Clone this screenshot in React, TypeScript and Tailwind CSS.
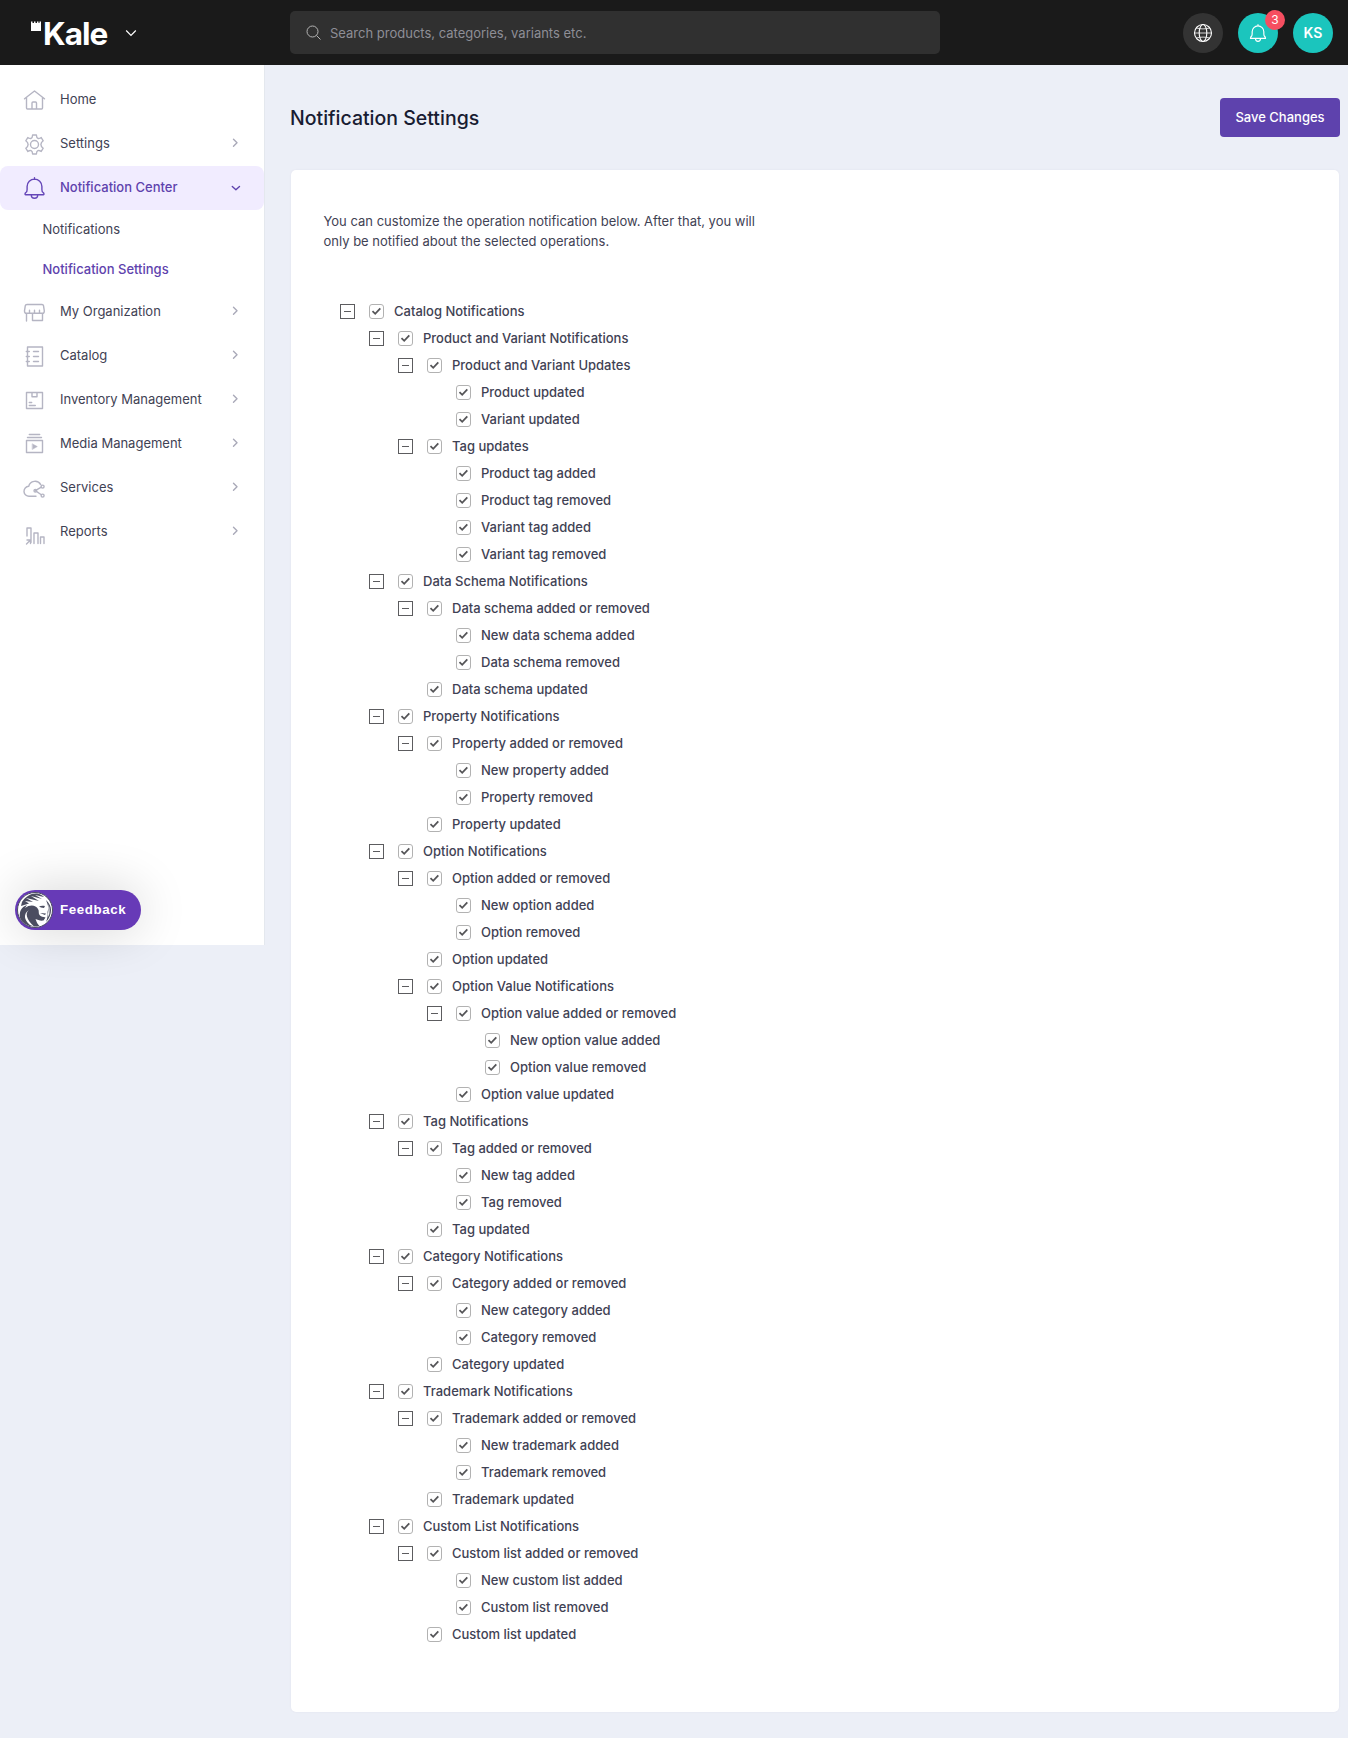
import React from 'react';

const Svg = ({ children }: { children: React.ReactNode }) => (
  <svg width="24" height="24" viewBox="0 0 24 24" fill="none" stroke="currentColor" strokeWidth="1.4" strokeLinecap="round" strokeLinejoin="round" className="shrink-0 overflow-visible">
    {children}
  </svg>
);

const icons: Record<string, React.ReactNode> = {
  home: <Svg><path d="M2.500 10.700 12.500 3 22.500 10.700M4.500 9.500v10.600q0 .9.900.9h14.200q.9 0 .9-.9V9.500M10 21v-6q0-1 1-1h2.500q1 0 1 1v6" /></Svg>,
  settings: (
    <Svg>
      <circle cx="12.500" cy="12.500" r="4" />
      <path d="M10.600 3h3.800q.2 2.900 1.500 3.400t3.300-.9l2 3.300q-2.300 1.600-2.300 3.700t2.300 3.700l-2 3.300q-2-1.400-3.300-.9T14.400 22h-3.800q-.2-2.900-1.500-3.400t-3.300.9l-2-3.300q2.300-1.600 2.300-3.700T3.800 8.800l2-3.300q2 1.400 3.300.9T10.600 3Z" />
    </Svg>
  ),
  bell: (
    <Svg>
      <path d="M12.500 1.800v1.400M3.500 18.700h18q.5 0 .5-.6 0-1.100-1.100-1.900-1-.8-1-2.800v-2.900a7.400 7.400 0 0 0-14.800 0v2.900q0 2-1 2.800Q3 17 3 18.100q0 .6.5.6ZM9.300 19a3.200 3.200 0 0 0 6.400 0" />
    </Svg>
  ),
  store: (
    <Svg>
      <path d="M5 4.500h15q1.300 0 1.500 1.200l.8 5.200q0 2.400-1.600 2.400H4.300q-1.800 0-1.800-2.400l.8-5.200Q3.500 4.500 5 4.500ZM7.500 13v-2.700M12.500 13v-2.700M17.500 13v-2.700M4.500 13.500V21M20.500 13.500v7H10.500v-7" />
    </Svg>
  ),
  catalog: (
    <Svg>
      <path d="M5.500 3h15v19h-15zM4.300 7.500h3M4.300 12.500h3M4.300 17.500h3M11.500 7.500h5M11.500 12.500h5M11.500 17.500h5" />
    </Svg>
  ),
  inventory: <Svg><path d="M4.500 4.500h16v16h-16zM10 4.500v4.300h5V4.500M7.300 14.500h2.400M7.300 17.500h6" /></Svg>,
  media: (
    <Svg>
      <path d="M7.300 2.500h10.400M5.500 5.500h14M4.500 8.500h16v12h-16z" />
      <path d="m10.500 11.900 4.800 2.700-4.800 2.700z" fill="currentColor" strokeWidth=".5" />
    </Svg>
  ),
  services: (
    <Svg>
      <path d="M14 20.300H7.300a5 5 0 0 1-.6-10 6.500 6.500 0 0 1 12-1.700M13.300 14.600l6-3.500M13.300 14.600l6 4.200" />
      <circle cx="13.300" cy="14.800" r="1.300" />
      <circle cx="20.600" cy="10.600" r="1.500" />
      <circle cx="20.600" cy="19.600" r="1.500" />
    </Svg>
  ),
  reports: (
    <Svg>
      <path d="M5 16V8h4v14.500M12 23.500V13h4v10.500M18.500 23.500V17h3.500v6.500M4.500 24l4-4M5 20h3.500v3.500" />
    </Svg>
  ),
};

const Chevron = ({ down = false }: { down?: boolean }) => (
  <svg width="12" height="12" viewBox="0 0 12 12" fill="none" stroke="currentColor" strokeWidth="1.4" strokeLinecap="round" strokeLinejoin="round" className="overflow-visible">
    <path d={down ? 'M3.300 4.500 6.900 7.700 10.500 4.500' : 'M4.500 2.300 8 5.800 4.500 9.300'} />
  </svg>
);

function NavItem({ icon, label, active = false, arrow = true }: { icon: string; label: string; active?: boolean; arrow?: boolean }) {
  return (
    <a className={`flex h-11 items-center pl-[22px] pr-[23px] ${active ? 'rounded-lg bg-[#f1ecff] font-medium text-[#5e42ad]' : 'text-[#3f4254]'}`}>
      <span className={active ? 'text-[#6546b8]' : 'text-[#b5b5c3]'}>{icons[icon]}</span>
      <span className="flex-1 pl-[14px]">{label}</span>
      {arrow && <span className={active ? 'text-[#5e42ad]' : 'pb-0.5 text-[#a9a9b8]'}><Chevron down={active} /></span>}
    </a>
  );
}

type Row = [depth: number, label: string, parent?: boolean];

const rows: Row[] = [
  [0, 'Catalog Notifications', true],
  [1, 'Product and Variant Notifications', true],
  [2, 'Product and Variant Updates', true],
  [3, 'Product updated'],
  [3, 'Variant updated'],
  [2, 'Tag updates', true],
  [3, 'Product tag added'],
  [3, 'Product tag removed'],
  [3, 'Variant tag added'],
  [3, 'Variant tag removed'],
  [1, 'Data Schema Notifications', true],
  [2, 'Data schema added or removed', true],
  [3, 'New data schema added'],
  [3, 'Data schema removed'],
  [2, 'Data schema updated'],
  [1, 'Property Notifications', true],
  [2, 'Property added or removed', true],
  [3, 'New property added'],
  [3, 'Property removed'],
  [2, 'Property updated'],
  [1, 'Option Notifications', true],
  [2, 'Option added or removed', true],
  [3, 'New option added'],
  [3, 'Option removed'],
  [2, 'Option updated'],
  [2, 'Option Value Notifications', true],
  [3, 'Option value added or removed', true],
  [4, 'New option value added'],
  [4, 'Option value removed'],
  [3, 'Option value updated'],
  [1, 'Tag Notifications', true],
  [2, 'Tag added or removed', true],
  [3, 'New tag added'],
  [3, 'Tag removed'],
  [2, 'Tag updated'],
  [1, 'Category Notifications', true],
  [2, 'Category added or removed', true],
  [3, 'New category added'],
  [3, 'Category removed'],
  [2, 'Category updated'],
  [1, 'Trademark Notifications', true],
  [2, 'Trademark added or removed', true],
  [3, 'New trademark added'],
  [3, 'Trademark removed'],
  [2, 'Trademark updated'],
  [1, 'Custom List Notifications', true],
  [2, 'Custom list added or removed', true],
  [3, 'New custom list added'],
  [3, 'Custom list removed'],
  [2, 'Custom list updated'],
];

const indents = ['pl-0', 'pl-[29px]', 'pl-[58px]', 'pl-[87px]', 'pl-[116px]'];

function TreeRow({ row: [depth, label, parent] }: { row: Row }) {
  return (
    <li className={`flex h-[27px] items-center ${indents[depth]}`}>
      <span className="flex w-[29px]">
        {parent && (
          <span className="flex size-[15px] items-center justify-center border border-[#5c5c5f]">
            <span className="h-px w-[7px] bg-[#5c5c5f]" />
          </span>
        )}
      </span>
      <span className="flex size-[15px] items-center justify-center rounded-[3px] border border-[#b2b2b2] text-[#555558]">
        <svg width="11" height="11" viewBox="0 0 11 11" fill="none" stroke="currentColor" strokeWidth="1.8">
          <path d="M1.500 5.200 4.200 7.800 9.300 2.300" />
        </svg>
      </span>
      <span className="ml-[10px]">{label}</span>
    </li>
  );
}

function LionBadge() {
  return (
    <svg width="36" height="36" viewBox="0 0 36 36">
      <circle cx="18" cy="18" r="17.500" fill="#fff" stroke="#4b4d60" />
      <path d="M5 10C9 4 14 1 20 1.500c3 .5 6 2 7 3.500L18 3l7 4-11-3 8 5L9 6l7 4-8-1 4 2.500L4 14z" fill="#4b4d60" />
      <path d="M3 26C2 20 4 15 10 13l-2 3c5-4 11-3 13 1 1.500 2 0 4 1.500 6 1 1.500 4 2 6 2.500l-2 3c-3 .5-6-.5-8-1.500 1 3 2 5 4 7C12 36 6 32 3 26Z" fill="#4b4d60" />
      <path d="M12 18c-4 3-3 9 5 16.500l-4-1.500C7 28 6 22 12 18Z" fill="#fff" />
      <path d="M22 14.500c2-1 4-1 6-.5l-1 2-3-.5zM29 8c3 3 5 6 5 10s-2 9-5 12c1.500-4 2-7 1.500-10L31.500 16l-1-4zM23 21l6 .5-1 1.500z" fill="#4b4d60" />
      <path d="M31.500 12c1.500 4 1.500 9 0 13l-.5-3 .5-4z" fill="#fff" />
    </svg>
  );
}

export default function App() {
  return (
    <div className="flex h-[1738px] w-[1348px] flex-col bg-[#eceff7] font-[Inter,sans-serif] text-[13px] text-[#3f4254]">
      <header className="flex h-[65px] shrink-0 items-center bg-[#1a1a1a]">
        <div className="flex w-[290px] items-center pl-[31px]">
          <svg width="10" height="10" viewBox="0 0 10 10" className="mb-[14px]">
            <path d="M0 .5h1.500V2H3V.5h1.500V2H6V.5h1.500V2h1V.5H10V10H0z" fill="#fff" />
          </svg>
          <span className="ml-[2px] pt-[2px] text-[31.500px] font-bold leading-none tracking-[-1px] text-white">Kale</span>
          <svg width="12" height="8" viewBox="0 0 12 8" fill="none" stroke="#fff" strokeWidth="1.200" className="ml-[17.500px]">
            <path d="m1.200 1.500 4.800 4.800 4.800-4.800" />
          </svg>
        </div>
        <div className="flex h-[43px] w-[650px] items-center rounded-[5px] bg-[#303030] pl-[16px] text-[#8e8e96]">
          <svg width="15" height="15" viewBox="0 0 15 15" fill="none" stroke="#b4b4b4" strokeWidth="1">
            <circle cx="6.500" cy="6.500" r="5.500" />
            <path d="m10.500 10.500 4 4" />
          </svg>
          <span className="ml-[9px] pt-[2px]">Search products, categories, variants etc.</span>
        </div>
        <div className="ml-auto flex gap-[15px] pr-[15px] pt-[1px]">
          <div className="flex size-10 items-center justify-center rounded-full bg-[#333]">
            <svg width="20" height="20" viewBox="0 0 20 20" fill="none" stroke="#fff" strokeWidth="1.100">
              <circle cx="10" cy="10" r="8.500" />
              <ellipse cx="10" cy="10" rx="3.800" ry="8.500" />
              <path d="M1.500 10h17M3.500 5c4 1.200 9 1.200 13 0M3.500 15c4-1.200 9-1.200 13 0" strokeWidth=".8" />
            </svg>
          </div>
          <div className="relative flex size-10 items-center justify-center rounded-full bg-[#1bc5bd] text-white">
            <svg width="20" height="20" viewBox="0 0 24 24" fill="none" stroke="currentColor" strokeWidth="1.400">
              <path d="M12 1.500v2M3 18.500h18q0-1.600-1.200-2.500-.8-.8-.8-3v-2.500a7 7 0 0 0-14 0V13q0 2.200-.8 3Q3 16.900 3 18.500ZM9 19a3 3 0 0 0 6 0" />
            </svg>
            <span className="absolute -right-[7px] -top-[3px] flex size-5 items-center justify-center rounded-full bg-[#f64e60] text-xs text-white">3</span>
          </div>
          <div className="flex size-10 items-center justify-center rounded-full bg-[#1bc5bd] pb-[2px] text-[14px] font-semibold text-white">KS</div>
        </div>
      </header>

      <div className="flex flex-1">
        <aside className="relative h-[880px] w-[265px] shrink-0 border-r border-[#e4e8ee] bg-white pt-[13px]">
          <NavItem icon="home" label="Home" arrow={false} />
          <NavItem icon="settings" label="Settings" />
          <NavItem icon="bell" label="Notification Center" active />
          <a className="flex h-10 items-center pb-px pl-[42.500px]">Notifications</a>
          <a className="flex h-10 items-center pb-px pl-[42.500px] font-medium text-[#5e42ad]">Notification Settings</a>
          <NavItem icon="store" label="My Organization" />
          <NavItem icon="catalog" label="Catalog" />
          <NavItem icon="inventory" label="Inventory Management" />
          <NavItem icon="media" label="Media Management" />
          <NavItem icon="services" label="Services" />
          <NavItem icon="reports" label="Reports" />
          <button className="absolute bottom-[15px] left-[15px] flex h-10 w-[126px] items-center rounded-full bg-[#673ab7] pl-[2px] font-[Liberation_Sans,sans-serif] text-[13.330px] font-bold tracking-[0.6px] text-white shadow-[0_0_50px_rgba(0,0,0,0.18)]">
            <LionBadge />
            <span className="ml-[7px]">Feedback</span>
          </button>
        </aside>

        <main className="flex flex-1 flex-col pl-[25px] pr-2">
          <div className="mt-[33px] flex h-[39px] items-center justify-between">
            <h1 className="pt-[2px] text-[19.500px] font-medium text-[#181c32]">Notification Settings</h1>
            <button className="h-[39px] w-[120px] rounded bg-[#5e42ad] font-medium text-white">Save Changes</button>
          </div>
          <section className="ml-px mr-px mt-[33px] h-[1542px] rounded-[5px] bg-white pl-[32.500px] pt-[41px] shadow-[0_0_2px_rgba(82,63,105,0.08)]">
            <p className="w-[460px] leading-5">
              You can customize the operation notification below. After that, you will only be notified about the selected operations.
            </p>
            <ul className="mt-[47px] pl-[16.500px] font-medium">
              {rows.map((row, i) => (
                <TreeRow key={i} row={row} />
              ))}
            </ul>
          </section>
        </main>
      </div>
    </div>
  );
}
